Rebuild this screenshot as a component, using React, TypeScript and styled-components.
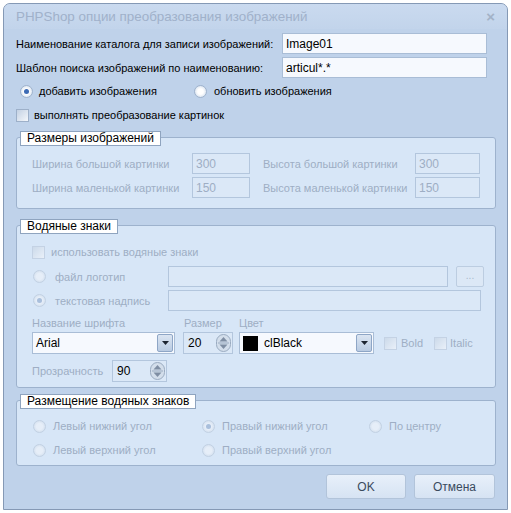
import React from 'react';
import styled, { createGlobalStyle } from 'styled-components';

const Global = createGlobalStyle`
  html, body { margin: 0; padding: 0; background: #ffffff; }
  body { font-family: "Liberation Sans", Arial, sans-serif; font-size: 11px; color: #000; }
  * { box-sizing: border-box; }
`;

const Window = styled.div`
  margin: 3px 0 0 3px;
  width: 505px;
  height: 507px;
  border: 1px solid #8599b5;
  border-radius: 7px 7px 0 0;
  background: #bfd2ea;
  display: flex;
  flex-direction: column;
  overflow: hidden;
`;

const TitleBar = styled.div`
  height: 25px;
  flex: none;
  display: flex;
  align-items: center;
  justify-content: space-between;
  padding: 0 12px 0 12px;
  background: linear-gradient(#cadaef, #c2d4eb);
  color: #a0b1ca;
  font-size: 13.4px;
`;

const CloseGlyph = styled.span`
  font-size: 15px;
  font-weight: bold;
  color: #a3b2c7;
`;

const Body = styled.div`
  flex: 1;
  display: flex;
  flex-direction: column;
  padding: 4px 11px 0 12px;
`;

const Row = styled.div<{ $h?: number; $mt?: number }>`
  display: flex;
  align-items: center;
  height: ${p => p.$h ?? 21}px;
  margin-top: ${p => p.$mt ?? 0}px;
  flex: none;
`;

const Label = styled.span<{ $w?: number; $dis?: boolean; $ml?: number }>`
  ${p => (p.$w ? `width: ${p.$w}px; flex: none;` : '')}
  margin-left: ${p => p.$ml ?? 0}px;
  color: ${p => (p.$dis ? '#9eaec4' : '#000')};
  white-space: nowrap;
`;

const Input = styled.div<{ $w: number; $dis?: boolean; $ml?: number }>`
  width: ${p => p.$w}px;
  height: 21px;
  flex: none;
  margin-left: ${p => p.$ml ?? 0}px;
  border: 1px solid ${p => (p.$dis ? '#b3c6dd' : '#a9bdd6')};
  background: ${p => (p.$dis ? '#dbe8f7' : '#f6f9fe')};
  color: ${p => (p.$dis ? '#9eaec4' : '#000')};
  display: flex;
  align-items: center;
  padding-left: 3px;
  font-size: 12px;
`;

const RadioCircle = styled.span<{ $on?: boolean; $dis?: boolean }>`
  width: 13px;
  height: 13px;
  flex: none;
  border-radius: 50%;
  border: 1px solid ${p => (p.$dis ? '#c2d1e3' : '#9fb3cd')};
  background: ${p =>
    p.$dis
      ? 'radial-gradient(circle, #e6eef8 40%, #c9d8ea 100%)'
      : 'radial-gradient(circle, #ffffff 35%, #c6d5e8 100%)'};
  display: flex;
  align-items: center;
  justify-content: center;
  &::after {
    content: '';
    display: ${p => (p.$on ? 'block' : 'none')};
    width: 5px;
    height: 5px;
    border-radius: 50%;
    background: ${p => (p.$dis ? '#a9bfdc' : '#3d6bb5')};
  }
`;

const Check = styled.span<{ $dis?: boolean }>`
  width: 13px;
  height: 13px;
  flex: none;
  border: 1px solid ${p => (p.$dis ? '#c4d2e4' : '#9db0c9')};
  background: ${p =>
    p.$dis ? 'linear-gradient(135deg, #ccdaea, #e9f0f9)' : 'linear-gradient(135deg, #c3d1e3, #f4f7fb)'};
`;

const Option = styled.div<{ $w?: number; $ml?: number }>`
  display: flex;
  align-items: center;
  ${p => (p.$w ? `width: ${p.$w}px; flex: none;` : '')}
  margin-left: ${p => p.$ml ?? 0}px;
`;

const Group = styled.div<{ $h: number; $mt: number }>`
  flex: none;
  height: ${p => p.$h}px;
  margin-top: ${p => p.$mt}px;
  width: 480px;
  border: 1px solid #9db2cd;
  border-radius: 3px;
  background: #d7e6f7;
  display: flex;
  flex-direction: column;
  padding: 0 0 0 15px;
`;

const Legend = styled.div`
  align-self: flex-start;
  margin: -7px 0 0 -12px;
  height: 15px;
  padding: 0 6px;
  background: #ffffff;
  border: 1px solid #8fa4bf;
  font-size: 12px;
  line-height: 13px;
  color: #000;
`;

const SizeGrid = styled.div`
  display: grid;
  grid-template-columns: 160px 58px 13px 152px 65px;
  grid-auto-rows: 21px;
  row-gap: 3px;
  margin-top: 7px;
  align-items: center;
`;

const GapCell = styled.span``;

const SmallButton = styled.div`
  width: 28px;
  height: 21px;
  flex: none;
  margin-left: 8px;
  border: 1px solid #bccde1;
  border-radius: 2px;
  background: #dce8f6;
  color: #a9b9cd;
  font-size: 10px;
  display: flex;
  align-items: center;
  justify-content: center;
  padding-bottom: 3px;
`;

const Combo = styled.div<{ $w: number; $ml?: number }>`
  width: ${p => p.$w}px;
  height: 22px;
  flex: none;
  margin-left: ${p => p.$ml ?? 0}px;
  border: 1px solid #a9bdd6;
  background: #f6f9fe;
  display: flex;
  align-items: center;
  padding: 0 1px 0 3px;
  font-size: 12px;
`;

const ComboText = styled.span`
  flex: 1;
  display: flex;
  align-items: center;
  gap: 6px;
`;

const Swatch = styled.span`
  width: 15px;
  height: 15px;
  background: #000;
  flex: none;
`;

const ComboBtn = styled.span`
  width: 16px;
  height: 18px;
  flex: none;
  border: 1px solid #8ea6c6;
  border-radius: 2px;
  background: linear-gradient(#dbe5f2, #b9cbe2);
  display: flex;
  align-items: center;
  justify-content: center;
`;

const Spin = styled.div<{ $w: number; $ml?: number }>`
  width: ${p => p.$w}px;
  height: 22px;
  flex: none;
  margin-left: ${p => p.$ml ?? 0}px;
  border: 1px solid #b3c6dd;
  background: #dbe8f7;
  display: flex;
  align-items: center;
  padding: 0 1px 0 4px;
  font-size: 12px;
  color: #000;
`;

const SpinText = styled.span`
  flex: 1;
`;

const Buttons = styled.div`
  display: flex;
  justify-content: flex-end;
  gap: 8px;
  margin-top: 8px;
  width: 480px;
  padding-right: 1px;
`;

const Btn = styled.div<{ $w: number }>`
  width: ${p => p.$w}px;
  height: 25px;
  border: 1px solid #b2c4da;
  border-radius: 3px;
  background: linear-gradient(#e8f0fa, #d6e3f3);
  color: #3a4a5e;
  font-size: 12px;
  display: flex;
  align-items: center;
  justify-content: center;
`;

const Arrow = () => (
  <svg width="7" height="4" viewBox="0 0 7 4">
    <path d="M0 0h7L3.5 4z" fill="#1b2330" />
  </svg>
);

const SpinIcon = () => (
  <svg width="15" height="18" viewBox="0 0 15 18">
    <rect x="0.5" y="0.5" width="14" height="17" rx="7" fill="#d3deeb" stroke="#9aabc0" />
    <path d="M3.5 7.5h8L7.5 3z" fill="#7f8ea3" />
    <path d="M3.5 10.5h8L7.5 15z" fill="#7f8ea3" />
    <path d="M2 9h11" stroke="#9aabc0" />
  </svg>
);

export default function App() {
  return (
    <>
      <Global />
      <Window>
        <TitleBar>
          <span>PHPShop опции преобразования изображений</span>
          <CloseGlyph>×</CloseGlyph>
        </TitleBar>
        <Body>
          <Row>
            <Label $w={266}>Наименование каталога для записи изображений:</Label>
            <Input $w={205}>Image01</Input>
          </Row>
          <Row $mt={3}>
            <Label $w={266}>Шаблон поиска изображений по наименованию:</Label>
            <Input $w={205}>articul*.*</Input>
          </Row>
          <Row $h={16} $mt={5}>
            <Option $w={174} $ml={4}>
              <RadioCircle $on />
              <Label $ml={6}>добавить изображения</Label>
            </Option>
            <Option>
              <RadioCircle />
              <Label $ml={7}>обновить изображения</Label>
            </Option>
          </Row>
          <Row $h={16} $mt={8}>
            <Option>
              <Check />
              <Label $ml={5}>выполнять преобразование картинок</Label>
            </Option>
          </Row>

          <Group $h={72} $mt={14}>
            <Legend>Размеры изображений</Legend>
            <SizeGrid>
              <Label $dis>Ширина большой картинки</Label>
              <Input $w={58} $dis>300</Input>
              <GapCell />
              <Label $dis>Высота большой картинки</Label>
              <Input $w={65} $dis>300</Input>
              <Label $dis>Ширина маленькой картинки</Label>
              <Input $w={58} $dis>150</Input>
              <GapCell />
              <Label $dis>Высота маленькой картинки</Label>
              <Input $w={65} $dis>150</Input>
            </SizeGrid>
          </Group>

          <Group $h={163} $mt={16}>
            <Legend>Водяные знаки</Legend>
            <Row $h={16} $mt={10}>
              <Option>
                <Check $dis />
                <Label $dis $ml={6}>использовать водяные знаки</Label>
              </Option>
            </Row>
            <Row $mt={6}>
              <Option $w={135} $ml={1}>
                <RadioCircle $dis />
                <Label $dis $ml={9}>файл логотип</Label>
              </Option>
              <Input $w={280} $dis />
              <SmallButton>...</SmallButton>
            </Row>
            <Row $mt={3}>
              <Option $w={135} $ml={1}>
                <RadioCircle $dis $on />
                <Label $dis $ml={9}>текстовая надпись</Label>
              </Option>
              <Input $w={313} $dis />
            </Row>
            <Row $h={14} $mt={5}>
              <Label $dis $w={152}>Название шрифта</Label>
              <Label $dis $w={55}>Размер</Label>
              <Label $dis>Цвет</Label>
            </Row>
            <Row $h={22} $mt={2}>
              <Combo $w={143}>
                <ComboText>Arial</ComboText>
                <ComboBtn>
                  <Arrow />
                </ComboBtn>
              </Combo>
              <Spin $w={50} $ml={8}>
                <SpinText>20</SpinText>
                <SpinIcon />
              </Spin>
              <Combo $w={135} $ml={6}>
                <ComboText>
                  <Swatch />
                  clBlack
                </ComboText>
                <ComboBtn>
                  <Arrow />
                </ComboBtn>
              </Combo>
              <Option $ml={10}>
                <Check $dis />
                <Label $dis $ml={4}>Bold</Label>
              </Option>
              <Option $ml={11}>
                <Check $dis />
                <Label $dis $ml={3}>Italic</Label>
              </Option>
            </Row>
            <Row $h={22} $mt={6}>
              <Label $dis $w={80}>Прозрачность</Label>
              <Spin $w={55}>
                <SpinText>90</SpinText>
                <SpinIcon />
              </Spin>
            </Row>
          </Group>

          <Group $h={66} $mt={12}>
            <Legend>Размещение водяных знаков</Legend>
            <Row $h={14} $mt={10}>
              <Option $w={169} $ml={1}>
                <RadioCircle $dis />
                <Label $dis $ml={7}>Левый нижний угол</Label>
              </Option>
              <Option $w={167}>
                <RadioCircle $dis $on />
                <Label $dis $ml={7}>Правый нижний угол</Label>
              </Option>
              <Option>
                <RadioCircle $dis />
                <Label $dis $ml={7}>По центру</Label>
              </Option>
            </Row>
            <Row $h={14} $mt={10}>
              <Option $w={169} $ml={1}>
                <RadioCircle $dis />
                <Label $dis $ml={7}>Левый верхний угол</Label>
              </Option>
              <Option $w={167}>
                <RadioCircle $dis />
                <Label $dis $ml={7}>Правый верхний угол</Label>
              </Option>
            </Row>
          </Group>

          <Buttons>
            <Btn $w={80}>OK</Btn>
            <Btn $w={81}>Отмена</Btn>
          </Buttons>
        </Body>
      </Window>
    </>
  );
}
